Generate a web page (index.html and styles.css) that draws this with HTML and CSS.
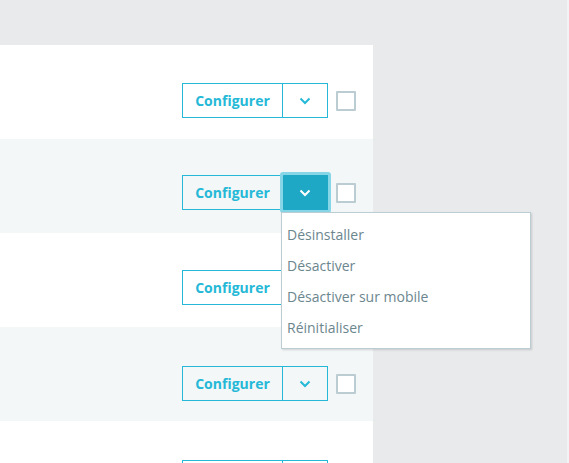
FILE: index.html
```html
<!DOCTYPE html>
<html lang="fr">
<head>
<meta charset="utf-8">
<title>Modules</title>
<link rel="stylesheet" href="styles.css">
</head>
<body>
<div class="page">
  <div class="panel">
    <div class="row r1">
      <div class="actions">
        <div class="btn-group">
          <button class="btn-config">Configurer</button>
          <button class="btn-toggle"><svg class="chev" viewBox="0 0 12 8" width="12" height="8"><path d="M1.5 1.5 L6 6 L10.5 1.5" fill="none" stroke="currentColor" stroke-width="2"/></svg></button>
        </div>
        <span class="check"></span>
      </div>
    </div>
    <div class="row alt r2">
      <div class="actions">
        <div class="btn-group open">
          <button class="btn-config">Configurer</button>
          <button class="btn-toggle active"><svg class="chev" viewBox="0 0 12 8" width="12" height="8"><path d="M1.5 1.5 L6 6 L10.5 1.5" fill="none" stroke="currentColor" stroke-width="2"/></svg></button>
          <div class="menu">
            <div class="item">Désinstaller</div>
            <div class="item">Désactiver</div>
            <div class="item">Désactiver sur mobile</div>
            <div class="item">Réinitialiser</div>
          </div>
        </div>
        <span class="check"></span>
      </div>
    </div>
    <div class="row r3">
      <div class="actions">
        <div class="btn-group">
          <button class="btn-config">Configurer</button>
          <button class="btn-toggle"><svg class="chev" viewBox="0 0 12 8" width="12" height="8"><path d="M1.5 1.5 L6 6 L10.5 1.5" fill="none" stroke="currentColor" stroke-width="2"/></svg></button>
        </div>
        <span class="check"></span>
      </div>
    </div>
    <div class="row alt r4">
      <div class="actions">
        <div class="btn-group">
          <button class="btn-config">Configurer</button>
          <button class="btn-toggle"><svg class="chev" viewBox="0 0 12 8" width="12" height="8"><path d="M1.5 1.5 L6 6 L10.5 1.5" fill="none" stroke="currentColor" stroke-width="2"/></svg></button>
        </div>
        <span class="check"></span>
      </div>
    </div>
    <div class="row r5">
      <div class="actions">
        <div class="btn-group">
          <button class="btn-config">Configurer</button>
          <button class="btn-toggle"><svg class="chev" viewBox="0 0 12 8" width="12" height="8"><path d="M1.5 1.5 L6 6 L10.5 1.5" fill="none" stroke="currentColor" stroke-width="2"/></svg></button>
        </div>
        <span class="check"></span>
      </div>
    </div>
  </div>
  <div class="side"></div>
  <div class="edge"></div>
</div>
</body>
</html>
```
FILE: styles.css
```css
html, body {
  margin: 0;
  padding: 0;
  height: 100%;
  overflow: hidden;
}
body {
  background: #e9eaec;
  font-family: "Open Sans", "Noto Sans", sans-serif;
}
.page {
  display: flex;
  height: 463px;
  overflow: hidden;
}
.panel {
  width: 373px;
  margin-top: 45px;
  background: #ffffff;
}
.side {
  flex: 1;
}
.edge {
  width: 2px;
  background: #f2f3f4;
}
.row {
  height: 94px;
  box-sizing: border-box;
  padding: 38px 17px 0 0;
  display: flex;
  justify-content: flex-end;
  align-items: flex-start;
  background: #ffffff;
}
.row.alt {
  background: #f3f7f8;
}
.row.r2 { padding-top: 36px; }
.row.r3 { padding-top: 37px; }
.row.r4 { padding-top: 39px; }
.row.r5 { padding-top: 39px; }
.actions {
  display: flex;
  align-items: center;
  gap: 8px;
}
.btn-group {
  position: relative;
  display: flex;
}
.btn-config, .btn-toggle {
  height: 35px;
  box-sizing: border-box;
  border: 1px solid #25b9d7;
  background: transparent;
  color: #25b9d7;
  font-family: "Open Sans", "Noto Sans", sans-serif;
  font-weight: 700;
  font-size: 14px;
  padding: 0;
  margin: 0;
  display: flex;
  align-items: center;
  justify-content: center;
}
.btn-config {
  width: 101px;
}
.btn-toggle {
  width: 45px;
  border-left: 0;
}
.chev {
  display: block;
  margin-top: 1px;
}
.btn-toggle.active {
  background: #1fa8c5;
  border-color: #1fa8c5;
  color: #ffffff;
  border-radius: 1px;
  box-shadow: 0 0 0 3px #86d6e7;
  position: relative;
  z-index: 1;
}
.check {
  width: 20px;
  height: 20px;
  box-sizing: border-box;
  border: 2px solid #bbcdd2;
  background: #ffffff;
  border-radius: 1px;
}
.menu {
  position: absolute;
  left: 99px;
  top: 37px;
  width: 250px;
  box-sizing: border-box;
  padding: 6px 0 5px;
  background: #ffffff;
  border: 1px solid #bbcdd2;
  box-shadow: 1px 1px 2px rgba(0, 0, 0, 0.15);
  z-index: 2;
}
.item {
  height: 31px;
  line-height: 31px;
  padding-left: 5px;
  font-size: 14px;
  color: #6c868e;
  white-space: nowrap;
}
```
